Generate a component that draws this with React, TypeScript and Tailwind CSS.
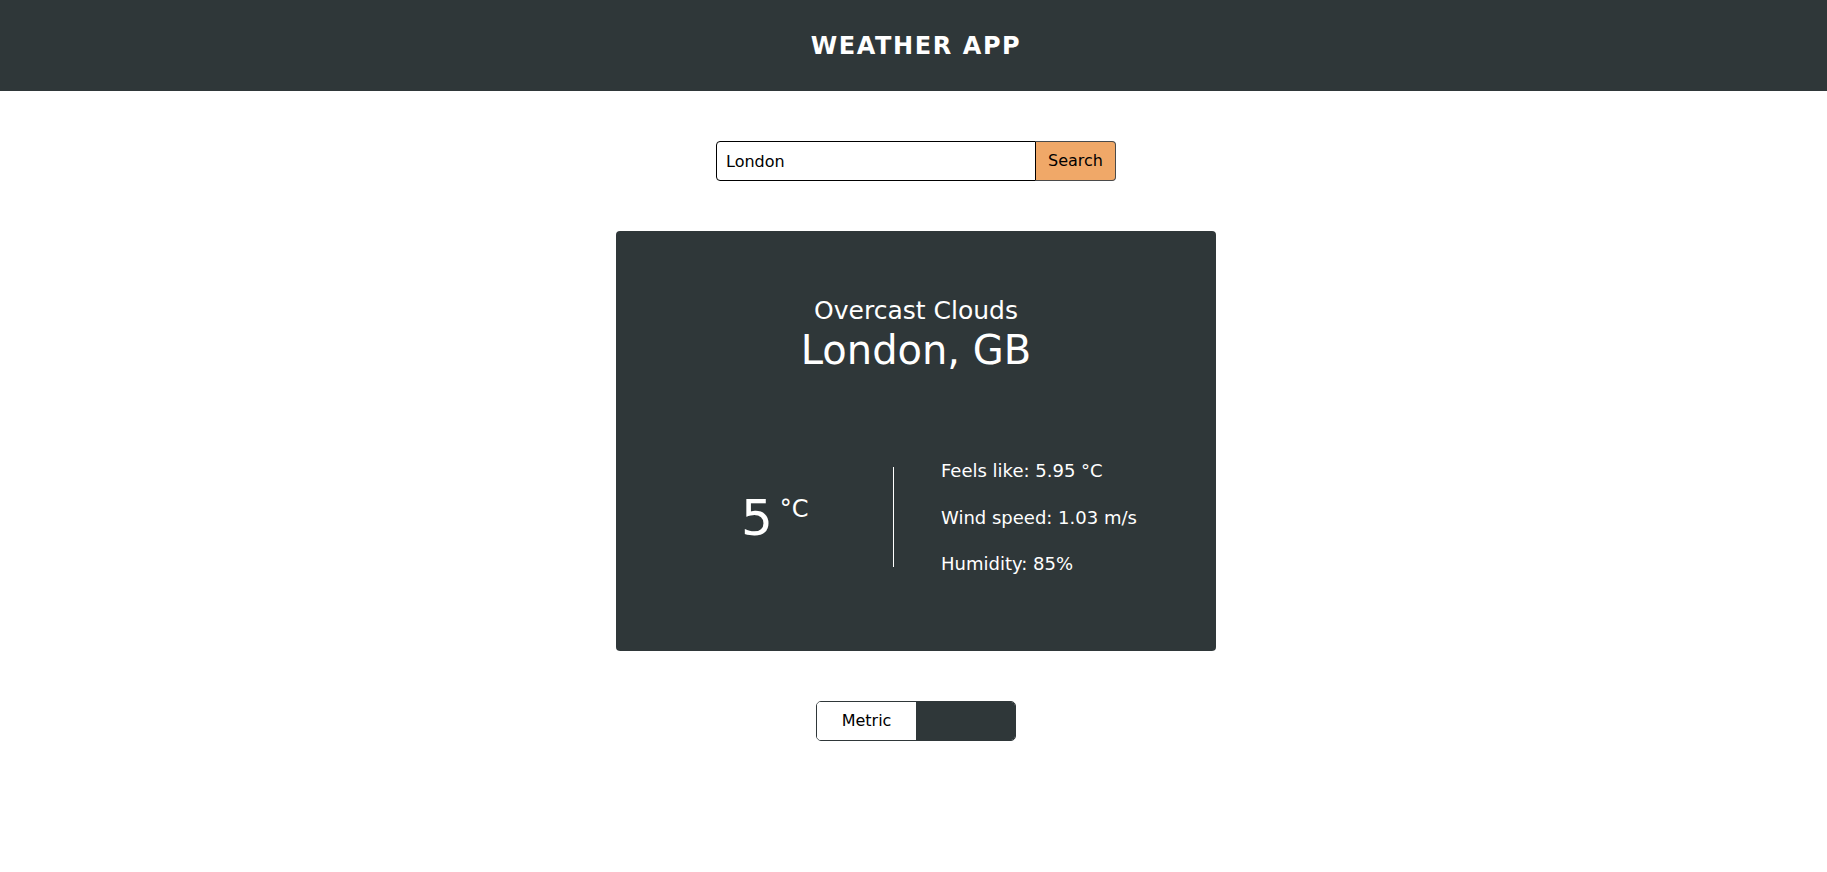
import { useEffect, useRef } from "react";

function SearchBar() {
  const inputRef = useRef<HTMLInputElement>(null);

  useEffect(() => {
    const el = inputRef.current;
    if (el) {
      el.focus();
      el.setSelectionRange(6, 6);
    }
  }, []);

  return (
    <form className="flex h-10 w-[400px]" onSubmit={(e) => e.preventDefault()}>
      <input
        ref={inputRef}
        defaultValue="London"
        className="h-10 w-[320px] rounded-l-[4px] border border-black bg-white px-[9px] text-[16px] text-black outline-none"
      />
      <button
        type="submit"
        className="h-10 w-20 rounded-r-[4px] border border-l-0 border-[#4a4a4a] bg-[#f0a868] text-[16px] text-black"
      >
        Search
      </button>
    </form>
  );
}

function WeatherCard() {
  return (
    <section className="flex h-[420px] w-[600px] flex-col rounded-[4px] bg-[#2f3739] pt-[65px] text-white">
      <div className="flex flex-col items-center">
        <p className="text-[25px] leading-[29px]">Overcast Clouds</p>
        <h2 className="text-[40px] leading-[50px]">London, GB</h2>
      </div>

      <div className="mt-[85px] flex items-center pl-[125px]">
        <div className="flex w-[152px] items-start">
          <span className="mt-[1px] text-[50px] leading-[58px]">5</span>
          <span className="ml-[7px] mt-[7px] text-[24px] leading-[28px]">°C</span>
        </div>
        <div className="h-[100px] w-px bg-white" />
        <div className="ml-[47px] flex flex-col gap-[25.5px] text-[18px] leading-[21px]">
          <p>Feels like: 5.95 °C</p>
          <p>Wind speed: 1.03 m/s</p>
          <p>Humidity: 85%</p>
        </div>
      </div>
    </section>
  );
}

function UnitToggle() {
  return (
    <div className="flex h-10 w-[200px] overflow-hidden rounded-[5px] border border-[#2f3739]">
      <button className="h-full w-[100px] bg-white text-[16px] text-black">Metric</button>
      <button className="h-full w-[100px] bg-[#2f3739] text-[16px] text-[#2f3739]">Imperial</button>
    </div>
  );
}

export default function App() {
  return (
    <div className="min-h-screen bg-white pl-[5px] font-['DejaVu_Sans',sans-serif]">
      <header className="-ml-[5px] flex h-[91px] items-center justify-center bg-[#2f3739] pl-[5px]">
        <h1 className="text-[24px] font-bold tracking-[1.6px] text-white">WEATHER APP</h1>
      </header>
      <main className="flex flex-col items-center gap-[50px] pt-[50px]">
        <SearchBar />
        <WeatherCard />
        <UnitToggle />
      </main>
    </div>
  );
}
